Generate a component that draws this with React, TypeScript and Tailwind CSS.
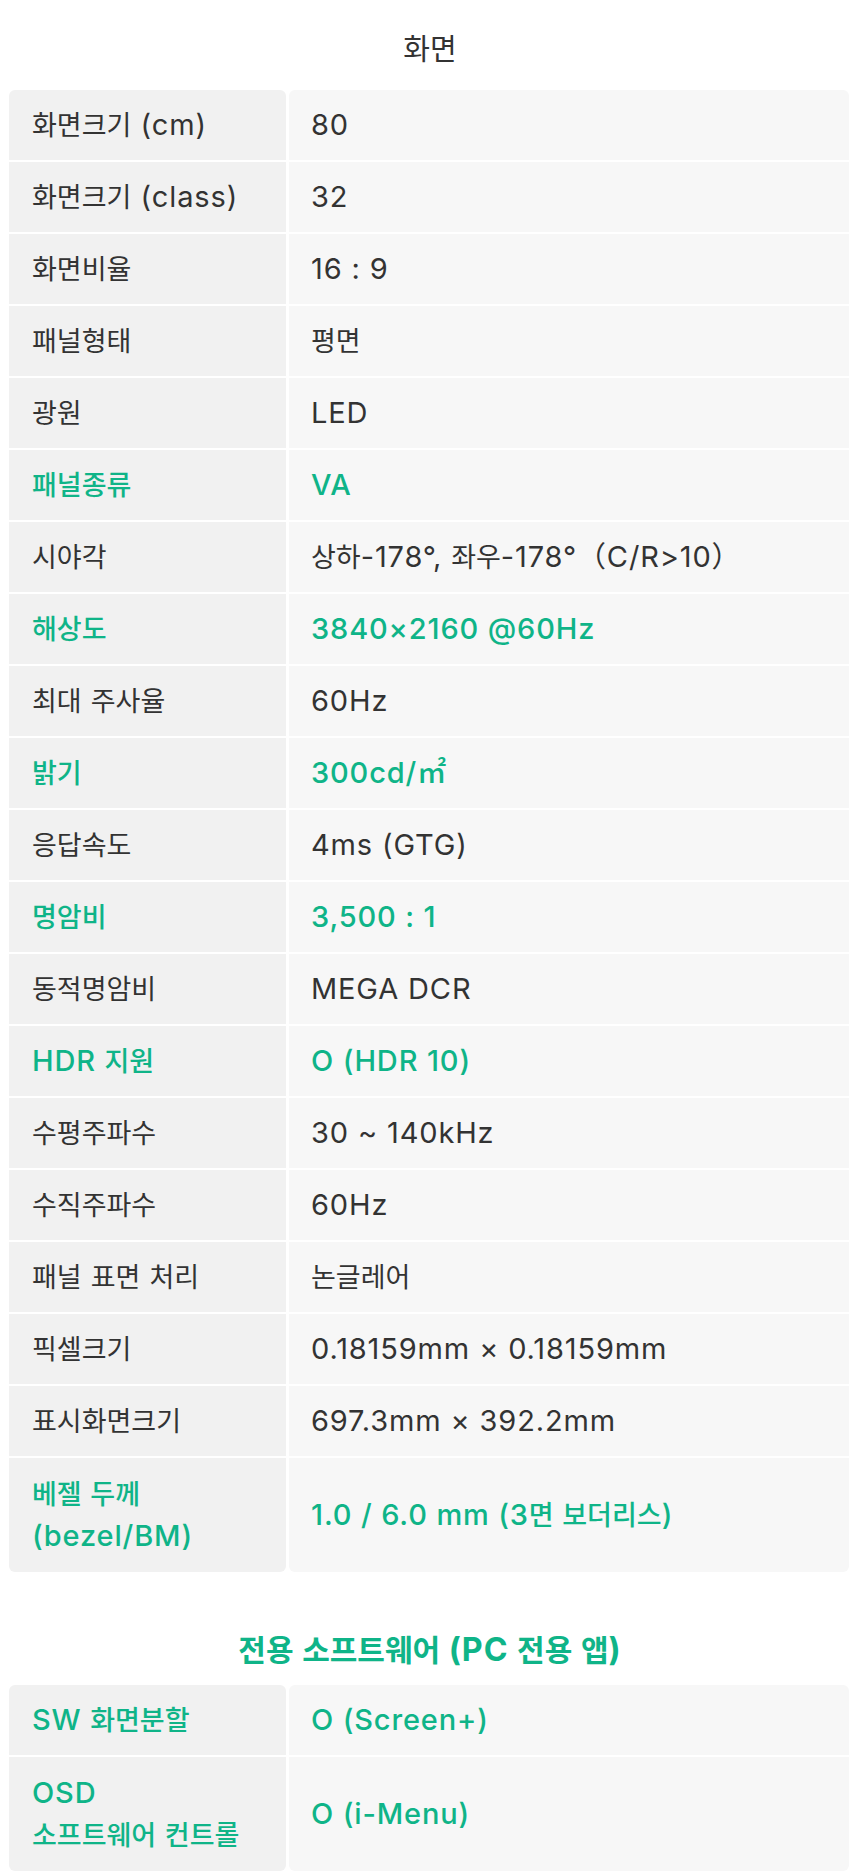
type Spec = {
  label: string;
  value: string;
  accent?: boolean;
};

const DISPLAY: Spec[] = [
  { label: "화면크기 (cm)", value: "80" },
  { label: "화면크기 (class)", value: "32" },
  { label: "화면비율", value: "16 : 9" },
  { label: "패널형태", value: "평면" },
  { label: "광원", value: "LED" },
  { label: "패널종류", value: "VA", accent: true },
  { label: "시야각", value: "상하-178°, 좌우-178°（C/R>10）" },
  { label: "해상도", value: "3840×2160 @60Hz", accent: true },
  { label: "최대 주사율", value: "60Hz" },
  { label: "밝기", value: "300cd/㎡", accent: true },
  { label: "응답속도", value: "4ms (GTG)" },
  { label: "명암비", value: "3,500 : 1", accent: true },
  { label: "동적명암비", value: "MEGA DCR" },
  { label: "HDR 지원", value: "O (HDR 10)", accent: true },
  { label: "수평주파수", value: "30 ~ 140kHz" },
  { label: "수직주파수", value: "60Hz" },
  { label: "패널 표면 처리", value: "논글레어" },
  { label: "픽셀크기", value: "0.18159mm × 0.18159mm" },
  { label: "표시화면크기", value: "697.3mm × 392.2mm" },
  { label: "베젤 두께\n(bezel/BM)", value: "1.0 / 6.0 mm (3면 보더리스)", accent: true },
];

const SOFTWARE: Spec[] = [
  { label: "SW 화면분할", value: "O (Screen+)", accent: true },
  { label: "OSD\n소프트웨어 컨트롤", value: "O (i-Menu)", accent: true },
];

// latin runs are set a touch larger and wider than the hangul around them
function Mixed({ text }: { text: string }) {
  const parts = text.split(/([\uAC00-\uD7A3]+)/);
  return (
    <>
      {parts.map((p, i) =>
        /[\uAC00-\uD7A3]/.test(p) ? (
          <span key={i}>{p}</span>
        ) : (
          <span key={i} className="text-[1.074em] tracking-[0.03em]">
            {p}
          </span>
        )
      )}
    </>
  );
}

function SpecTable({ rows }: { rows: Spec[] }) {
  return (
    <div className="ml-[9px] w-[840px] grid grid-cols-[277px_560px] gap-x-[3px] gap-y-[2px]">
      {rows.map((row, i) => {
        const first = i === 0;
        const last = i === rows.length - 1;
        const multi = row.label.includes("\n");
        const color = row.accent ? "text-[#0fb488] font-medium" : "text-[#333]";
        const round = `${first ? "rounded-t-md" : ""} ${last ? "rounded-b-md" : ""}`;
        const height = multi ? "min-h-[114px]" : "min-h-[70px]";
        return (
          <div key={row.label} className="contents">
            <div
              className={`bg-[#f1f1f1] px-[23px] flex items-center leading-[41px] ${height} ${color} ${round}`}
            >
              <div>
                {row.label.split("\n").map((line) => (
                  <div key={line}>
                    <Mixed text={line} />
                  </div>
                ))}
              </div>
            </div>
            <div
              className={`bg-[#f7f7f7] px-[22px] flex items-center leading-[41px] ${height} ${color} ${round}`}
            >
              <div>
                <Mixed text={row.value} />
              </div>
            </div>
          </div>
        );
      })}
    </div>
  );
}

export default function App() {
  return (
    <div className="w-[860px] bg-white pb-[6px] text-[27px] font-['Inter','Noto_Sans_CJK_KR',sans-serif]">
      {/* Display */}
      <div className="h-[90px] pt-[10px] flex items-center justify-center">
        <h2 className="text-[29px] font-normal text-[#333]">화면</h2>
      </div>
      <SpecTable rows={DISPLAY} />

      {/* Software */}
      <div className="mt-[43px] h-[70px] flex items-center justify-center">
        <h2 className="text-[30px] font-bold text-[#0fb488]">
          <Mixed text="전용 소프트웨어 (PC 전용 앱)" />
        </h2>
      </div>
      <SpecTable rows={SOFTWARE} />
    </div>
  );
}
